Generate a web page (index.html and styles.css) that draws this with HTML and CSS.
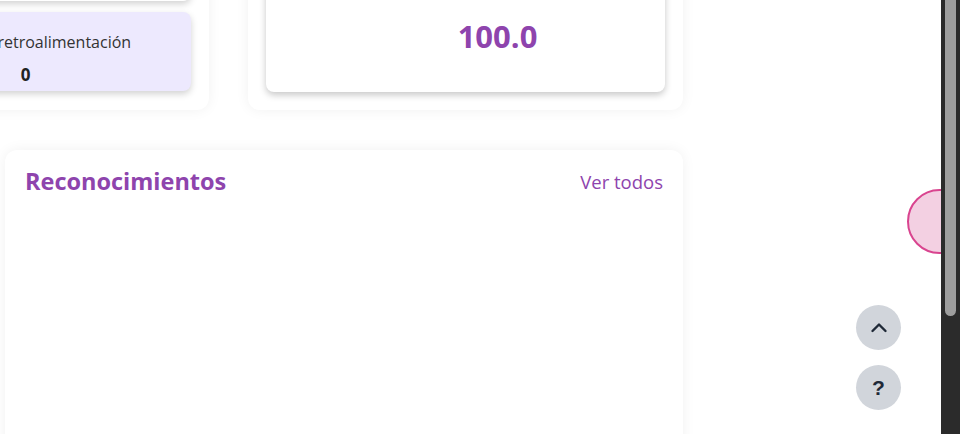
FILE: index.html
```html
<!DOCTYPE html>
<html lang="es">
<head>
  <meta charset="UTF-8">
  <meta name="viewport" content="width=device-width, initial-scale=1.0">
  <title>Panel</title>
  <link rel="stylesheet" href="styles.css">
</head>
<body>
  <main class="main">
    <div class="content">
      <div class="top-row">
        <section class="panel panel-stats">
          <div class="stat-card stat-card-white"></div>
          <div class="stat-card stat-card-lilac">
            <p class="stat-label">Sesiones de retroalimentación</p>
            <p class="stat-value">0</p>
          </div>
        </section>

        <section class="panel panel-score">
          <div class="score-card">
            <p class="score-value">100.0</p>
          </div>
        </section>
      </div>

      <section class="panel panel-awards">
        <div class="panel-header">
          <h2>Reconocimientos</h2>
          <a href="#" class="link">Ver todos</a>
        </div>
      </section>
    </div>

    <div class="bubble"></div>

    <div class="fab-stack">
      <button class="fab" aria-label="Subir">
        <svg width="20" height="20" viewBox="0 0 20 20" fill="none" stroke="currentColor" stroke-width="2.4" stroke-linecap="round" stroke-linejoin="round">
          <path d="M3.5 13 L10 6.5 L16.5 13"/>
        </svg>
      </button>
      <button class="fab fab-help" aria-label="Ayuda">?</button>
    </div>
  </main>

  <div class="scrollbar"><div class="scrollbar-thumb"></div></div>
</body>
</html>
```

FILE: styles.css
```css
* {
  box-sizing: border-box;
}

body {
  margin: 0;
  height: 434px;
  display: flex;
  overflow: hidden;
  background: #ffffff;
  font-family: "Open Sans", sans-serif;
  color: #2d2d2d;
}

.main {
  flex: 1;
  position: relative;
  overflow: hidden;
}

/* page is scrolled: the top row starts above the viewport */
.content {
  width: 683px;
  padding-left: 5px;
  margin-top: -100px;
}

.top-row {
  display: flex;
  gap: 39px;
  margin-left: -163px;
  margin-bottom: 40px;
}

.panel {
  background: #ffffff;
  border-radius: 12px;
  box-shadow: 0 0 14px rgba(0, 0, 0, 0.06);
  padding: 18px;
  flex-shrink: 0;
}

.panel-stats {
  width: 367px;
  display: flex;
  flex-direction: column;
  gap: 11px;
}

.stat-card {
  border-radius: 8px;
  box-shadow: 0 3px 7px rgba(0, 0, 0, 0.18);
}

.stat-card-white {
  background: #ffffff;
  height: 83px;
}

.stat-card-lilac {
  background: #ede9fe;
  height: 79px;
  padding-top: 18px;
  text-align: center;
}

.stat-label {
  margin: 0;
  padding-right: 15px;
  font-size: 16px;
  line-height: 24px;
  color: #333333;
}

.stat-value {
  margin: 9px 0 0;
  font-size: 17px;
  line-height: 24px;
  font-weight: 700;
  color: #222222;
}

.panel-score {
  width: 435px;
}

.score-card {
  height: 174px;
  background: #ffffff;
  border-radius: 8px;
  box-shadow: 0 3px 7px rgba(0, 0, 0, 0.22);
  padding: 98px 0 0 64px;
  text-align: center;
}

.score-value {
  margin: 0;
  font-size: 31px;
  line-height: 40px;
  font-weight: 700;
  color: #8e44ad;
}

.panel-awards {
  height: 320px;
  padding: 17px 20px;
}

.panel-header {
  display: flex;
  justify-content: space-between;
  align-items: center;
}

.panel-header h2 {
  margin: 0;
  font-size: 23.5px;
  line-height: 28px;
  font-weight: 700;
  color: #8e44ad;
}

.link {
  font-size: 18.5px;
  color: #8e44ad;
  text-decoration: none;
}

.bubble {
  position: absolute;
  top: 189px;
  right: -31px;
  width: 65px;
  height: 65px;
  border-radius: 50%;
  background: #f3d0e2;
  border: 2px solid #d9448f;
}

.fab-stack {
  position: absolute;
  right: 40px;
  bottom: 24px;
  display: flex;
  flex-direction: column;
  gap: 15px;
}

.fab {
  width: 45px;
  height: 45px;
  border-radius: 50%;
  border: none;
  background: #d1d5db;
  color: #1f2937;
  display: flex;
  align-items: center;
  justify-content: center;
  padding: 0;
}

.fab-help {
  font-family: "Liberation Sans", sans-serif;
  font-size: 21px;
  font-weight: 700;
}

.scrollbar {
  width: 19px;
  background: #2b2b2b;
  padding: 0 4px;
}

.scrollbar-thumb {
  height: 316px;
  background: #9e9e9e;
  border-radius: 0 0 6px 6px;
}
```
